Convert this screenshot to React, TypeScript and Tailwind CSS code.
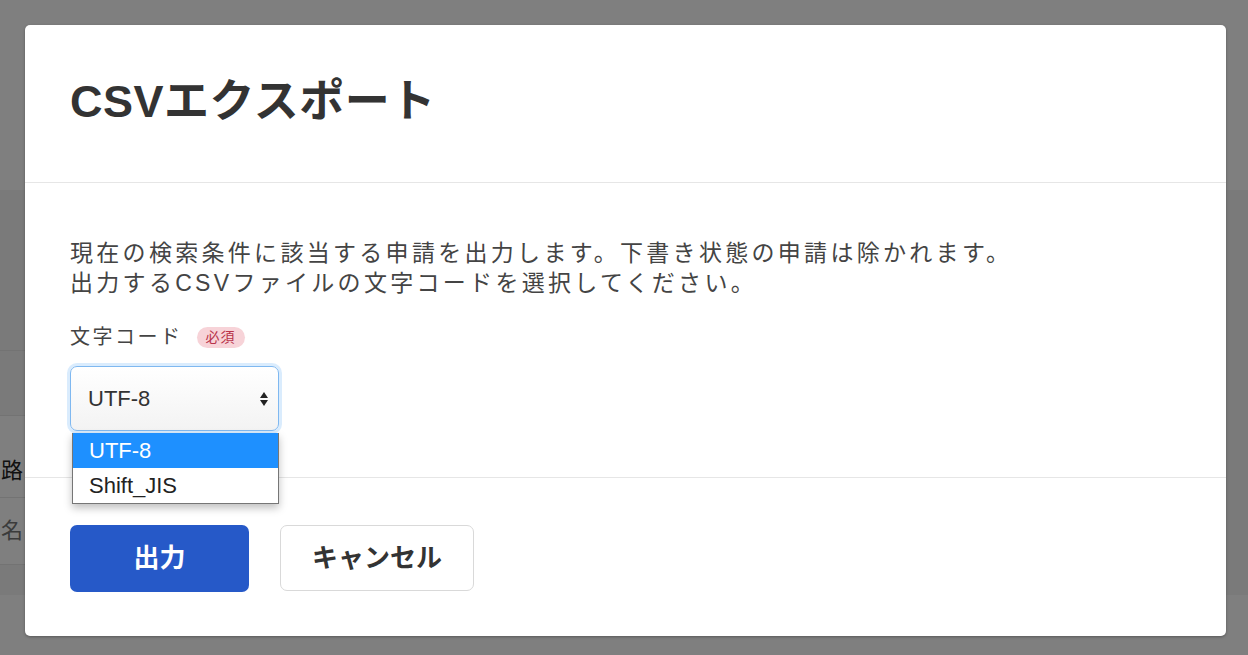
import React from "react";

const FONT = { fontFamily: '"Liberation Sans", "Noto Sans CJK JP", sans-serif' };

export default function App() {
  return (
    <div className="relative w-[1248px] h-[655px] overflow-hidden" style={FONT}>
      {/* page behind */}
      <div className="flex flex-col w-full h-full">
        <div className="h-[190px] bg-white" />
        <div className="h-[405px] bg-[#f4f4f4] flex flex-col pt-[160px]">
          <div className="w-[60px] flex flex-col bg-white">
            <div className="h-[65px] border-t border-[#e6e6e6] bg-[#f4f4f4]" />
            <div className="h-[82px] border-t border-[#e6e6e6] flex items-center justify-end pr-[37px] pt-[28px]">
              <span className="text-[22px] text-[#222] leading-none">路</span>
            </div>
            <div className="h-[68px] border-t border-b border-[#e6e6e6] flex items-center justify-end pr-[37px]">
              <span className="text-[22px] text-[#777] leading-none">名</span>
            </div>
          </div>
        </div>
        <div className="flex-1 bg-white" />
      </div>

      {/* overlay */}
      <div className="absolute inset-0 bg-black/50" />

      {/* modal */}
      <div className="absolute left-[25px] top-[25px] w-[1201px] h-[611px] bg-white rounded-[5px] shadow-[0_1px_3px_rgba(0,0,0,0.3)] flex flex-col text-[#333]">
        <div className="h-[158px] flex items-center pl-[45px] pb-[4px] border-b border-[#e6e6e6]">
          <h1 className="text-[45px] font-bold text-[#333] leading-none tracking-[0.5px]">CSVエクスポート</h1>
        </div>
        <div className="relative pl-[45px] pt-[55px] pb-[46px] border-b border-[#e6e6e6]">
          <p className="text-[23px] leading-[30px] tracking-[3.3px] text-[#444]">
            現在の検索条件に該当する申請を出力します。下書き状態の申請は除かれます。
            <br />
            出力するCSVファイルの文字コードを選択してください。
          </p>
          <div className="mt-[24px] flex items-center h-[30px]">
            <span className="text-[20px] tracking-[2.5px] text-[#444]">文字コード</span>
            <span className="ml-[14px] h-[21px] px-[9px] rounded-full bg-[#f7d3d8] text-[#b8324a] text-[14px] leading-[21px] tracking-[1px]">
              必須
            </span>
          </div>
          <div className="mt-[14px] w-[209px] h-[65px] rounded-[7px] border border-[#7fb8f0] shadow-[0_0_0_3px_rgba(150,200,250,0.35)] bg-gradient-to-b from-white to-[#f3f3f3] flex items-center justify-between pl-[17px] pr-[10px]">
            <span className="text-[22px] text-[#333]">UTF-8</span>
            <span className="flex flex-col items-center gap-[2px]">
              <svg width="8" height="6" viewBox="0 0 8 6"><path d="M4 0 L8 6 L0 6 Z" fill="#222" /></svg>
              <svg width="8" height="6" viewBox="0 0 8 6"><path d="M0 0 L8 0 L4 6 Z" fill="#222" /></svg>
            </span>
          </div>
          {/* dropdown list */}
          <div className="absolute left-[47px] top-[250px] w-[207px] bg-white border border-[#767676] border-t-0 shadow-[0_4px_8px_rgba(0,0,0,0.25)] z-10">
            <div className="h-[35px] bg-[#1e90ff] text-white text-[22px] leading-[35px] pl-[16px]">UTF-8</div>
            <div className="h-[35px] text-[#222] text-[22px] leading-[35px] pl-[16px]">Shift_JIS</div>
          </div>
        </div>
        <div className="flex items-start gap-[31px] pl-[45px] pt-[47px]">
          <button className="w-[179px] h-[67px] rounded-[7px] bg-[#2659c8] text-white text-[26px] font-bold">
            出力
          </button>
          <button className="w-[194px] h-[66px] rounded-[7px] bg-white border border-[#d9d9d9] text-[#333] text-[26px] font-bold">
            キャンセル
          </button>
        </div>
      </div>
    </div>
  );
}
